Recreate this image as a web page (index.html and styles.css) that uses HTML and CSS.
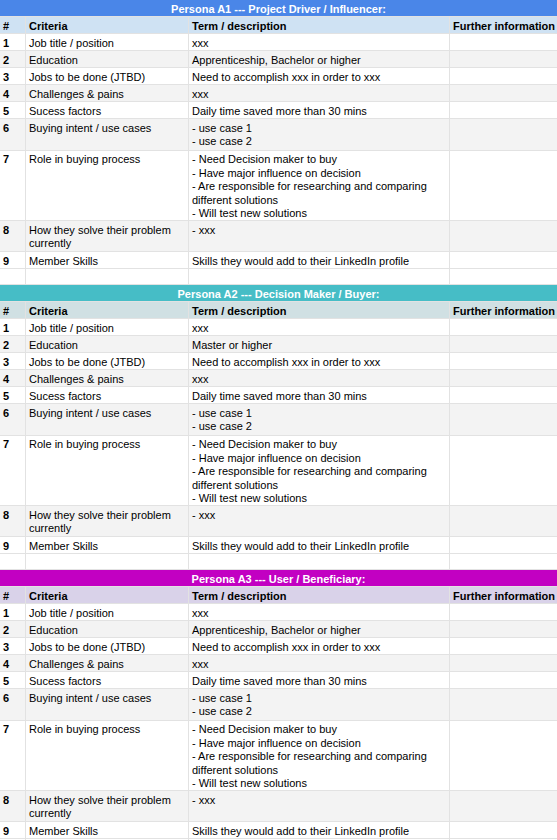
FILE: index.html
```html
<!DOCTYPE html>
<html lang="en">
<head>
<meta charset="utf-8">
<title>Personas</title>
<link rel="stylesheet" href="styles.css">
</head>
<body>
<div class="sheet">
  <section class="persona p1">
    <div class="row title"><div class="cell">Persona A1 --- Project Driver / Influencer:</div></div>
    <div class="row head"><div class="cell">#</div><div class="cell">Criteria</div><div class="cell">Term / description</div><div class="cell">Further information</div></div>
    <div class="row"><div class="cell num">1</div><div class="cell">Job title / position</div><div class="cell">xxx</div><div class="cell"></div></div>
    <div class="row alt"><div class="cell num">2</div><div class="cell">Education</div><div class="cell">Apprenticeship, Bachelor or higher</div><div class="cell"></div></div>
    <div class="row"><div class="cell num">3</div><div class="cell">Jobs to be done (JTBD)</div><div class="cell">Need to accomplish xxx in order to xxx</div><div class="cell"></div></div>
    <div class="row alt"><div class="cell num">4</div><div class="cell">Challenges &amp; pains</div><div class="cell">xxx</div><div class="cell"></div></div>
    <div class="row"><div class="cell num">5</div><div class="cell">Sucess factors</div><div class="cell">Daily time saved more than 30 mins</div><div class="cell"></div></div>
    <div class="row alt two"><div class="cell num">6</div><div class="cell">Buying intent / use cases</div><div class="cell"><div>- use case 1</div><div>- use case 2</div></div><div class="cell"></div></div>
    <div class="row five"><div class="cell num">7</div><div class="cell">Role in buying process</div><div class="cell"><div>- Need Decision maker to buy</div><div>- Have major influence on decision</div><div>- Are responsible for researching and comparing different solutions</div><div>- Will test new solutions</div></div><div class="cell"></div></div>
    <div class="row alt twob"><div class="cell num">8</div><div class="cell">How they solve their problem currently</div><div class="cell">- xxx</div><div class="cell"></div></div>
    <div class="row"><div class="cell num">9</div><div class="cell">Member Skills</div><div class="cell">Skills they would add to their LinkedIn profile</div><div class="cell"></div></div>
    <div class="row empty"><div class="cell"></div><div class="cell"></div><div class="cell"></div><div class="cell"></div></div>
  </section>

  <section class="persona p2">
    <div class="row title"><div class="cell">Persona A2 --- Decision Maker / Buyer:</div></div>
    <div class="row head"><div class="cell">#</div><div class="cell">Criteria</div><div class="cell">Term / description</div><div class="cell">Further information</div></div>
    <div class="row"><div class="cell num">1</div><div class="cell">Job title / position</div><div class="cell">xxx</div><div class="cell"></div></div>
    <div class="row alt"><div class="cell num">2</div><div class="cell">Education</div><div class="cell">Master or higher</div><div class="cell"></div></div>
    <div class="row"><div class="cell num">3</div><div class="cell">Jobs to be done (JTBD)</div><div class="cell">Need to accomplish xxx in order to xxx</div><div class="cell"></div></div>
    <div class="row alt"><div class="cell num">4</div><div class="cell">Challenges &amp; pains</div><div class="cell">xxx</div><div class="cell"></div></div>
    <div class="row"><div class="cell num">5</div><div class="cell">Sucess factors</div><div class="cell">Daily time saved more than 30 mins</div><div class="cell"></div></div>
    <div class="row alt two"><div class="cell num">6</div><div class="cell">Buying intent / use cases</div><div class="cell"><div>- use case 1</div><div>- use case 2</div></div><div class="cell"></div></div>
    <div class="row five"><div class="cell num">7</div><div class="cell">Role in buying process</div><div class="cell"><div>- Need Decision maker to buy</div><div>- Have major influence on decision</div><div>- Are responsible for researching and comparing different solutions</div><div>- Will test new solutions</div></div><div class="cell"></div></div>
    <div class="row alt twob"><div class="cell num">8</div><div class="cell">How they solve their problem currently</div><div class="cell">- xxx</div><div class="cell"></div></div>
    <div class="row"><div class="cell num">9</div><div class="cell">Member Skills</div><div class="cell">Skills they would add to their LinkedIn profile</div><div class="cell"></div></div>
    <div class="row empty"><div class="cell"></div><div class="cell"></div><div class="cell"></div><div class="cell"></div></div>
  </section>

  <section class="persona p3">
    <div class="row title"><div class="cell">Persona A3 --- User / Beneficiary:</div></div>
    <div class="row head"><div class="cell">#</div><div class="cell">Criteria</div><div class="cell">Term / description</div><div class="cell">Further information</div></div>
    <div class="row"><div class="cell num">1</div><div class="cell">Job title / position</div><div class="cell">xxx</div><div class="cell"></div></div>
    <div class="row alt"><div class="cell num">2</div><div class="cell">Education</div><div class="cell">Apprenticeship, Bachelor or higher</div><div class="cell"></div></div>
    <div class="row"><div class="cell num">3</div><div class="cell">Jobs to be done (JTBD)</div><div class="cell">Need to accomplish xxx in order to xxx</div><div class="cell"></div></div>
    <div class="row alt"><div class="cell num">4</div><div class="cell">Challenges &amp; pains</div><div class="cell">xxx</div><div class="cell"></div></div>
    <div class="row"><div class="cell num">5</div><div class="cell">Sucess factors</div><div class="cell">Daily time saved more than 30 mins</div><div class="cell"></div></div>
    <div class="row alt two"><div class="cell num">6</div><div class="cell">Buying intent / use cases</div><div class="cell"><div>- use case 1</div><div>- use case 2</div></div><div class="cell"></div></div>
    <div class="row five"><div class="cell num">7</div><div class="cell">Role in buying process</div><div class="cell"><div>- Need Decision maker to buy</div><div>- Have major influence on decision</div><div>- Are responsible for researching and comparing different solutions</div><div>- Will test new solutions</div></div><div class="cell"></div></div>
    <div class="row alt twob"><div class="cell num">8</div><div class="cell">How they solve their problem currently</div><div class="cell">- xxx</div><div class="cell"></div></div>
    <div class="row"><div class="cell num">9</div><div class="cell">Member Skills</div><div class="cell">Skills they would add to their LinkedIn profile</div><div class="cell"></div></div>
    <div class="row empty"><div class="cell"></div><div class="cell"></div><div class="cell"></div><div class="cell"></div></div>
  </section>
</div>
</body>
</html>
```

FILE: styles.css
```css
* { box-sizing: border-box; }

html, body {
  margin: 0;
  padding: 0;
  background: #ffffff;
}

body {
  font-family: "Liberation Sans", Arial, sans-serif;
  font-size: 11px;
  color: #000000;
  overflow: hidden;
}

.sheet {
  display: flex;
  flex-direction: column;
  gap: 1px;
  background: #e2e2e2;
  width: 100%;
}

.persona {
  display: flex;
  flex-direction: column;
  gap: 1px;
}

.row {
  display: grid;
  grid-template-columns: 25px 162px 260px 1fr;
  column-gap: 1px;
  height: 16px;
}

.row.two { height: 31px; }
.row.five { height: 69px; }
.row.twob { height: 30px; }
.row.empty { height: 15px; }

.cell {
  background: #ffffff;
  padding: 2.5px 3px 0;
  line-height: 13.5px;
  overflow: hidden;
}

.row.five .cell { padding-top: 2px; }

.row.alt .cell { background: #f3f3f3; }

.num { font-weight: bold; }

.row.title { grid-template-columns: 1fr; }

.row.title .cell {
  text-align: center;
  font-weight: bold;
  color: #ffffff;
  white-space: nowrap;
}

.row.head .cell {
  font-weight: bold;
  white-space: nowrap;
}

.p1 .title .cell { background: #4a86e8; }
.p1 .head .cell { background: #cfe2f3; }

.p2 .title .cell { background: #46bdc6; }
.p2 .head .cell { background: #d0e0e3; }

.p3 .title .cell { background: #c200c2; }
.p3 .head .cell { background: #d9d2e9; }
```
